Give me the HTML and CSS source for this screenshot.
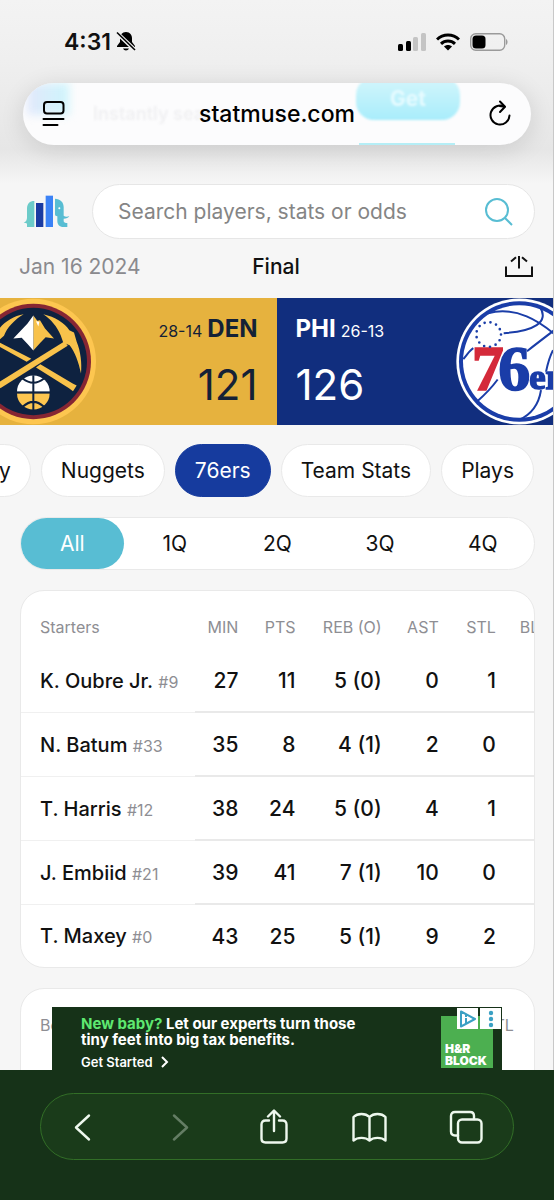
FILE: index.html
```html
<!DOCTYPE html>
<html lang="en">
<head>
    <meta charset="UTF-8">
    <meta name="viewport" content="width=device-width, initial-scale=1.0">
    <title>Nuggets vs 76ers - StatMuse</title>
    <link rel="stylesheet" href="styles.css">
</head>
<body>
    <div class="page">
        <div class="browser-top">
            <div class="status-bar">
                <div class="status-left">
                    <span class="time">4:31</span>
                    <svg width="20" height="21" viewBox="0 0 20 21">
                        <path d="M10 1c-4 0-6 3-6 6.500v3.500L1 15v1h18v-1l-3-4V7.500C16 4 14 1 10 1zM7 17.500c1 2.500 5 2.500 6 0z" fill="#000"/>
                        <path d="M0 1l19 18" stroke="#f1f1f1" stroke-width="4"/>
                        <path d="M1 1.500l18 17.500" stroke="#000" stroke-width="1.600"/>
                    </svg>
                </div>
                <div class="status-right">
                    <svg width="28" height="18" viewBox="0 0 28 18">
                        <rect x="0" y="11" width="5" height="7" rx="1.500"/>
                        <rect x="8" y="8" width="5" height="10" rx="1.500"/>
                        <rect x="15" y="4" width="5" height="14" rx="1.500" fill="#c4c4c4"/>
                        <rect x="23" y="0" width="5" height="18" rx="1.500" fill="#c4c4c4"/>
                    </svg>
                    <svg width="24" height="18" viewBox="0 0 24 18">
                        <g fill="none" stroke="#000" stroke-width="3">
                            <path d="M1 6.500C7 .5 17 .5 23 6.500"/>
                            <path d="M5 10.800C9 7 15 7 19 10.800"/>
                        </g>
                        <path d="M12 17.500L8 13.600C10.300 11.600 13.700 11.600 16 13.600z"/>
                    </svg>
                    <svg width="38" height="18" viewBox="0 0 38 18">
                        <rect x=".7" y=".7" width="34" height="16.600" rx="5" fill="none" stroke="#9a9a9a" stroke-width="1.400"/>
                        <rect x="2.500" y="2.500" width="13" height="13" rx="3.500"/>
                        <path d="M36 6v6c2-1 2-5 0-6z" fill="#9a9a9a"/>
                    </svg>
                </div>
            </div>
            <div class="address-bar">
                <div class="glass">
                    <span class="glass-logo"></span>
                    <span class="glass-text">Instantly sear</span>
                    <span class="glass-button">Get</span>
                    <span class="glass-edge"></span>
                </div>
                <button class="icon-button" aria-label="Page menu">
                    <svg width="24" height="28" viewBox="0 0 24 28" fill="none" stroke="#000" stroke-width="2" stroke-linecap="round">
                        <rect x="2" y="2" width="19.500" height="11.500" rx="3"/>
                        <path d="M1.500 19h20M1.500 25h14"/>
                    </svg>
                </button>
                <span class="address">statmuse.com</span>
                <button class="icon-button" aria-label="Reload">
                    <svg width="24" height="28" viewBox="0 0 24 28" fill="none" stroke="#000" stroke-width="2" stroke-linecap="round" stroke-linejoin="round">
                        <path d="M21.500 15.500A9.500 9.500 0 1 1 16.500 6.700L11.500 6"/>
                        <path d="M12 1.500L17 6.700L12 12"/>
                    </svg>
                </button>
            </div>
        </div>

        <header class="site-header">
            <a href="#" class="site-logo" aria-label="StatMuse">
                <svg width="48" height="34" viewBox="0 0 144 102">
                    <path d="M34 18v78H12V86C10 84 6 84 2 83C8 80 11 78 12 68V42C12 26 20 18 34 18z" fill="#6ccbc9"/>
                    <rect x="39" y="24" width="22" height="72" fill="#1a3ba2"/>
                    <rect x="68" y="2" width="22" height="94" fill="#3b82f6"/>
                    <path d="M96 11C112 13 122 20 122 36V62C126 66 134 66 139 63C136 69 130 71 122 71V78C122 83 127 84 133 84V96H122C108 96 103 88 103 78V64C98 64 96 61 96 58z" fill="#58bdd3"/>
                    <circle cx="109" cy="40" r="3" fill="#fff"/>
                </svg>
            </a>
            <form class="search">
                <input type="search" aria-label="Search" placeholder="Search players, stats or odds">
                <button type="submit" class="icon-button" aria-label="Submit search">
                    <svg width="28" height="28" viewBox="0 0 28 28" fill="none" stroke="#58bdd3" stroke-width="2">
                        <circle cx="12" cy="12" r="11"/>
                        <path d="M20 20l7 7"/>
                    </svg>
                </button>
            </form>
        </header>

        <div class="game-info">
            <span class="game-date">Jan 16 2024</span>
            <span class="game-status">Final</span>
            <button class="icon-button share" aria-label="Share">
                <svg width="28" height="22" viewBox="0 0 28 22" fill="none" stroke="#111" stroke-width="2">
                    <path d="M1 10.500V20h26v-9.500M14 0v12.500M6 5.500L11 1.200M22 5.500L17 1.200"/>
                </svg>
            </button>
        </div>

        <section class="scoreboard">
            <div class="team team-den">
                <svg class="den-logo" width="100" height="127" viewBox="0 24 300 380">
                    <circle cx="100" cy="214" r="188" fill="#fdc650"/>
                    <circle cx="100" cy="214" r="173" fill="#862633"/>
                    <circle cx="100" cy="214" r="161" fill="#0e2240"/>
                    <g fill="#f8c24b">
                        <path d="M-8 279L194 153L203 167L1 294z"/>
                        <path d="M121 222L218 280L230 286L219 303L207 294L108 232z"/>
                        <path d="M-4 156L94 206L80 215L-4 168z"/>
                        <path d="M130 72C165 80 194 98 208 120L222 127L230 155C242 184 246 220 243 250C236 216 225 186 209 165L190 158L182 135C171 108 153 88 130 72z"/>
                        <path d="M71 72C44 76 14 94 0 113V147L12 137C20 113 45 87 71 72z"/>
                        <path d="M100 76L112 92L120 90L135 115L162 145L137 141L121 158L100 181z"/>
                    </g>
                    <path d="M100 76L82 101L40 145L65 143L82 161L100 181zM108 93l7 16l3-14z" fill="#fff"/>
                    <path d="M51 305A49 49 0 0 1 149 305z" fill="#fff"/>
                    <path d="M51 309A49 49 0 0 0 149 309z" fill="#fdc650"/>
                    <g fill="none" stroke="#0e2240" stroke-width="6">
                        <path d="M100 255v105M48 307h104M68 265Q100 290 132 265M68 350Q100 320 132 350"/>
                    </g>
                </svg>
                <div class="score-box">
                    <div class="team-line"><span class="record">28-14</span><span class="abbr">DEN</span></div>
                    <div class="score">121</div>
                </div>
            </div>
            <div class="team team-phi">
                <div class="score-box">
                    <div class="team-line"><span class="abbr">PHI</span><span class="record">26-13</span></div>
                    <div class="score">126</div>
                </div>
                <svg class="phi-logo" width="97" height="127" viewBox="540 24 291 380">
                    <circle cx="730" cy="214" r="189" fill="#fff"/>
                    <circle cx="730" cy="214" r="181" fill="#1a3da8"/>
                    <circle cx="730" cy="214" r="169" fill="#fff"/>
                    <g fill="none" stroke="#1a3da8" stroke-width="6">
                        <path d="M636 69C720 48 790 90 850 145M683 129C770 124 824 97 790 48M562 207C580 185 582 180 592 174M604 333Q640 302 665 268M753 183Q785 158 840 116M831 180Q818 205 810 245M795 300Q785 365 728 390"/>
                    </g>
                    <g class="wordmark">
                        <text x="587" y="301" font-size="192" fill="#d42a3a" stroke="#d42a3a">7</text>
                        <text x="667" y="301" font-size="192" fill="#1a3da8" stroke="#1a3da8">6</text>
                        <text x="760" y="296" font-size="110" fill="#1a3da8" stroke="#1a3da8">er</text>
                    </g>
                    <circle cx="638" cy="133" r="37" fill="none" stroke="#1a3da8" stroke-width="8" stroke-linecap="round" stroke-dasharray="0 17.880"/>
                </svg>
            </div>
        </section>

        <nav class="tabs">
            <a href="#" class="tab">Summary</a>
            <a href="#" class="tab">Nuggets</a>
            <a href="#" class="tab active">76ers</a>
            <a href="#" class="tab">Team Stats</a>
            <a href="#" class="tab">Plays</a>
        </nav>

        <div class="periods">
            <button class="period active">All</button>
            <button class="period">1Q</button>
            <button class="period">2Q</button>
            <button class="period">3Q</button>
            <button class="period">4Q</button>
        </div>

        <div class="card">
            <table>
                <colgroup>
                    <col class="col-name"><col class="col-stat"><col class="col-stat"><col class="col-reb"><col class="col-stat"><col class="col-stat"><col class="col-stat">
                </colgroup>
                <thead>
                    <tr><th>Starters</th><th>MIN</th><th>PTS</th><th>REB (O)</th><th>AST</th><th>STL</th><th>BLK</th></tr>
                </thead>
                <tbody>
                    <tr><td>K. Oubre Jr. <small>#9</small></td><td>27</td><td>11</td><td>5 (0)</td><td>0</td><td>1</td><td></td></tr>
                    <tr><td>N. Batum <small>#33</small></td><td>35</td><td>8</td><td>4 (1)</td><td>2</td><td>0</td><td></td></tr>
                    <tr><td>T. Harris <small>#12</small></td><td>38</td><td>24</td><td>5 (0)</td><td>4</td><td>1</td><td></td></tr>
                    <tr><td>J. Embiid <small>#21</small></td><td>39</td><td>41</td><td>7 (1)</td><td>10</td><td>0</td><td></td></tr>
                    <tr><td>T. Maxey <small>#0</small></td><td>43</td><td>25</td><td>5 (1)</td><td>9</td><td>2</td><td></td></tr>
                </tbody>
            </table>
        </div>

        <div class="card bench">
            <table>
                <colgroup>
                    <col class="col-name"><col class="col-stat"><col class="col-stat"><col class="col-reb"><col class="col-stat"><col class="col-stat"><col class="col-stat">
                </colgroup>
                <thead>
                    <tr><th>Bench</th><th></th><th></th><th></th><th></th><th>STL</th><th></th></tr>
                </thead>
            </table>
        </div>
    </div>

    <footer class="browser-bottom">
        <div class="ad">
            <div class="ad-copy">
                <p><strong>New baby?</strong> Let our experts turn those<br>tiny feet into big tax benefits.</p>
                <a href="#">Get Started
                    <svg width="8" height="12" viewBox="0 0 8 12" fill="none" stroke="#fff" stroke-width="2"><path d="M1 1l5 5l-5 5"/></svg>
                </a>
            </div>
            <div class="ad-brand">H&amp;R<br>BLOCK</div>
            <div class="ad-choices">
                <button aria-label="Ad choices">
                    <svg width="18" height="18" viewBox="0 0 18 18" fill="none" stroke="#3aa0c4" stroke-width="2">
                        <path d="M2 1.500L16 9L2 16.500z" stroke-linejoin="round"/>
                        <path d="M7 8v5M7 5v2"/>
                    </svg>
                </button>
                <button aria-label="Ad options">
                    <svg width="6" height="18" viewBox="0 0 6 18" fill="#3aa0c4">
                        <circle cx="3" cy="3" r="2.200"/><circle cx="3" cy="9" r="2.200"/><circle cx="3" cy="15" r="2.200"/>
                    </svg>
                </button>
            </div>
        </div>
        <nav class="toolbar">
            <button class="icon-button" aria-label="Back">
                <svg width="32" height="36" viewBox="0 0 32 36"><path d="M22 6.500L9 18.500L22 30.500"/></svg>
            </button>
            <button class="icon-button" aria-label="Forward" disabled>
                <svg width="32" height="36" viewBox="0 0 32 36"><path d="M12 6.500L25 18.500L12 30.500"/></svg>
            </button>
            <button class="icon-button" aria-label="Share">
                <svg width="32" height="36" viewBox="0 0 32 36"><path d="M13 11.500H9.500Q5.500 11.500 5.500 15.500V29.500Q5.500 33.500 9.500 33.500H26.500Q30.500 33.500 30.500 29.500V15.500Q30.500 11.500 26.500 11.500H23M18 22V2M12 7.500L18 1.500L24 7.500"/></svg>
            </button>
            <button class="icon-button" aria-label="Bookmarks">
                <svg width="36" height="36" viewBox="0 0 36 36"><path d="M18.500 31.500C14.500 28 6.500 28 2.500 31.500V8C6.500 4 14.500 4 18.500 8C22.500 4 30.500 4 34.500 8V31.500C30.500 28 22.500 28 18.500 31.500zM18.500 8V31"/></svg>
            </button>
            <button class="icon-button" aria-label="Tabs">
                <svg width="34" height="36" viewBox="0 0 34 36"><path d="M9 26.500H6Q2 26.500 2 22.500V7Q2 3 6 3H21Q25 3 25 7V10"/><rect x="9" y="10.500" width="23.500" height="23" rx="4"/></svg>
            </button>
        </nav>
    </footer>
</body>
</html>
```
FILE: styles.css
```css
* {
    box-sizing: border-box;
}

body {
    margin: 0;
    height: 100vh;
    display: flex;
    flex-direction: column;
    overflow: hidden;
    font-family: Inter, "Liberation Sans", sans-serif;
    font-size: 21px;
    color: #111;
    background-color: #f6f6f6;
}

button {
    font: inherit;
    color: inherit;
    padding: 0;
    border: none;
    background: none;
}

a {
    color: inherit;
    text-decoration: none;
}

svg {
    display: block;
}

.icon-button {
    display: flex;
}

.page {
    flex: 1;
    min-height: 0;
    overflow: hidden;
    border-right: 1px solid #c8c8c8;
}

/* Browser chrome */
.browser-top {
    padding: 0 22px 39px 23px;
    background: linear-gradient(#f3f3f3 0, #efefef 60px, #e6e6e6 150px, #f6f6f6 184px);
}

.status-bar {
    display: flex;
    justify-content: space-between;
    align-items: center;
    height: 83px;
    padding: 0 23px 0 41px;
}

.status-left,
.status-right {
    display: flex;
    align-items: center;
    gap: 10px;
}

.status-left {
    gap: 5px;
}

.time {
    font-size: 23px;
    font-weight: 600;
}

.address-bar {
    position: relative;
    display: flex;
    justify-content: space-between;
    align-items: center;
    height: 62px;
    padding: 0 19px;
    border-radius: 31px;
    background-color: #fcfcfd;
    box-shadow: 0 4px 24px rgba(0, 0, 0, 0.12);
}

.address-bar .icon-button,
.address {
    position: relative;
}

.address {
    font-size: 23px;
    font-weight: 500;
    color: #000;
}

/* Page content showing faintly through the bar */
.glass {
    position: absolute;
    inset: 0;
    overflow: hidden;
    border-radius: 31px;
}

.glass span {
    position: absolute;
}

.glass-logo {
    left: 4px;
    top: 0;
    width: 42px;
    height: 32px;
    background: linear-gradient(90deg, #e2e8fb, #cdf5fc);
    filter: blur(4px);
}

.glass-text {
    left: 70px;
    top: 20px;
    font-size: 18px;
    font-weight: 600;
    color: #f0f0f2;
    filter: blur(1px);
}

.glass-button {
    right: 71px;
    top: -6px;
    width: 104px;
    height: 43px;
    padding-top: 9px;
    border-radius: 18px;
    text-align: center;
    font-weight: 700;
    color: #e6fbff;
    background: linear-gradient(#d4f6fc, #a9edfb);
    filter: blur(1px);
}

.glass-edge {
    right: 76px;
    bottom: 0;
    width: 96px;
    height: 2px;
    background-color: #b5eef6;
}

/* Site header */
.site-header {
    display: flex;
    align-items: center;
    gap: 21px;
    padding: 0 18px 0 23px;
}

.search {
    flex: 1;
    display: flex;
    align-items: center;
    height: 55px;
    padding: 0 21px 0 25px;
    border: 1px solid #e6e6e6;
    border-radius: 28px;
    background-color: #fff;
}

.search input {
    flex: 1;
    min-width: 0;
    padding: 0;
    border: none;
    outline: none;
    font: inherit;
    background: none;
}

.search input::placeholder {
    color: #858585;
}

.game-info {
    display: grid;
    grid-template-columns: 1fr auto 1fr;
    align-items: center;
    height: 59px;
    padding: 0 20px 4px 19px;
}

.game-date {
    color: #8a8a8e;
}

.game-status {
    font-weight: 500;
}

.share {
    justify-self: end;
}

/* Scoreboard */
.scoreboard {
    display: grid;
    grid-template-columns: 1fr 1fr;
}

.team {
    display: flex;
    justify-content: space-between;
}

.team-den {
    background-color: #e6b23e;
    color: #142136;
    text-align: right;
}

.team-phi {
    background-color: #112e7e;
    color: #fff;
}

.score-box {
    padding: 15px 19px 0;
}

.team-line {
    display: flex;
    align-items: baseline;
    gap: 5px;
    height: 32px;
    line-height: 32px;
}

.record {
    font-size: 16px;
}

.abbr {
    font-size: 24px;
    font-weight: 700;
}

.score {
    font-size: 42px;
    line-height: 80px;
}

.wordmark {
    font-family: "Liberation Serif", serif;
    font-weight: 700;
    stroke-width: 5px;
    filter: drop-shadow(0 0 1px #fff);
}

/* Tabs */
.tabs {
    display: flex;
    justify-content: flex-end;
    gap: 10px;
    padding: 19px 19px 20px;
    overflow: hidden;
}

.tab {
    flex: none;
    padding: 0 19px;
    line-height: 51px;
    border: 1px solid #e9e9e9;
    border-radius: 27px;
    background-color: #fff;
}

.tab.active {
    color: #fff;
    border-color: #163b9e;
    background-color: #163b9e;
}

.periods {
    display: grid;
    grid-template-columns: repeat(5, 1fr);
    margin: 0 18px 20px 20px;
    border: 1px solid #e9e9e9;
    border-radius: 27px;
    background-color: #fff;
}

.period {
    height: 51px;
    border-radius: 26px;
}

.period.active {
    color: #fff;
    background-color: #58bdd3;
}

/* Stat tables */
.card {
    margin: 0 18px 20px 20px;
    border: 1px solid #e9e9e9;
    border-radius: 24px;
    background-color: #fff;
    overflow: hidden;
}

table {
    width: 546px;
    table-layout: fixed;
    border-collapse: separate;
    border-spacing: 0;
}

.col-name {
    width: 174px;
}

.col-stat {
    width: 57px;
}

.col-reb {
    width: 86px;
}

th,
td {
    padding: 0 14px 0 0;
    text-align: right;
    white-space: nowrap;
}

th:first-child,
td:first-child {
    padding-left: 19px;
    padding-right: 0;
    text-align: left;
}

th {
    height: 58px;
    padding-top: 14px;
    font-size: 16px;
    font-weight: 400;
    color: #8e8e93;
}

th:last-child {
    padding-right: 17px;
}

td {
    height: 64px;
    font-weight: 500;
    border-bottom: 2px solid #e9e9e9;
}

td:first-child {
    font-size: 20px;
    border-bottom: 1px solid #f0f0f0;
}

tr:last-child td {
    height: 62px;
    border-bottom: none;
}

small {
    font-size: 16px;
    font-weight: 400;
    color: #8e8e93;
}

.bench {
    min-height: 240px;
}

.bench table {
    width: 564px;
}

.bench .col-name {
    width: 192px;
}

/* Bottom bar */
.browser-bottom {
    position: relative;
    padding: 23px 40px 40px;
    background-color: #163218;
}

.ad {
    position: absolute;
    left: 52px;
    right: 52px;
    bottom: 100%;
    display: flex;
    justify-content: space-between;
    height: 63px;
    padding: 9px 9px 0 29px;
    background-color: #163218;
    color: #fff;
    font-size: 15px;
    font-weight: 700;
    line-height: 16px;
}

.ad p {
    margin: 0 0 6px;
}

.ad strong {
    font-weight: 700;
    color: #5ee870;
}

.ad a {
    display: flex;
    align-items: center;
    gap: 8px;
    font-size: 13px;
    font-weight: 600;
}

.ad-brand {
    width: 52px;
    height: 52px;
    padding: 27px 0 0 4px;
    background-color: #4caf50;
    font-size: 12px;
    font-weight: 900;
    line-height: 12px;
}

.ad-choices {
    position: absolute;
    right: 1px;
    top: 1px;
    display: flex;
    gap: 2px;
}

.ad-choices button {
    display: flex;
    justify-content: center;
    align-items: center;
    width: 21px;
    height: 21px;
    background-color: #fff;
}

.toolbar {
    display: flex;
    justify-content: space-between;
    align-items: center;
    height: 67px;
    padding: 0 30px 0 26px;
    border: 1px solid #326e27;
    border-radius: 34px;
    background-color: #1a3b1a;
}

.toolbar svg {
    fill: none;
    stroke: #eef8ee;
    stroke-width: 2.4;
    stroke-linecap: round;
    stroke-linejoin: round;
}

.toolbar button:disabled {
    opacity: 0.35;
}
```
